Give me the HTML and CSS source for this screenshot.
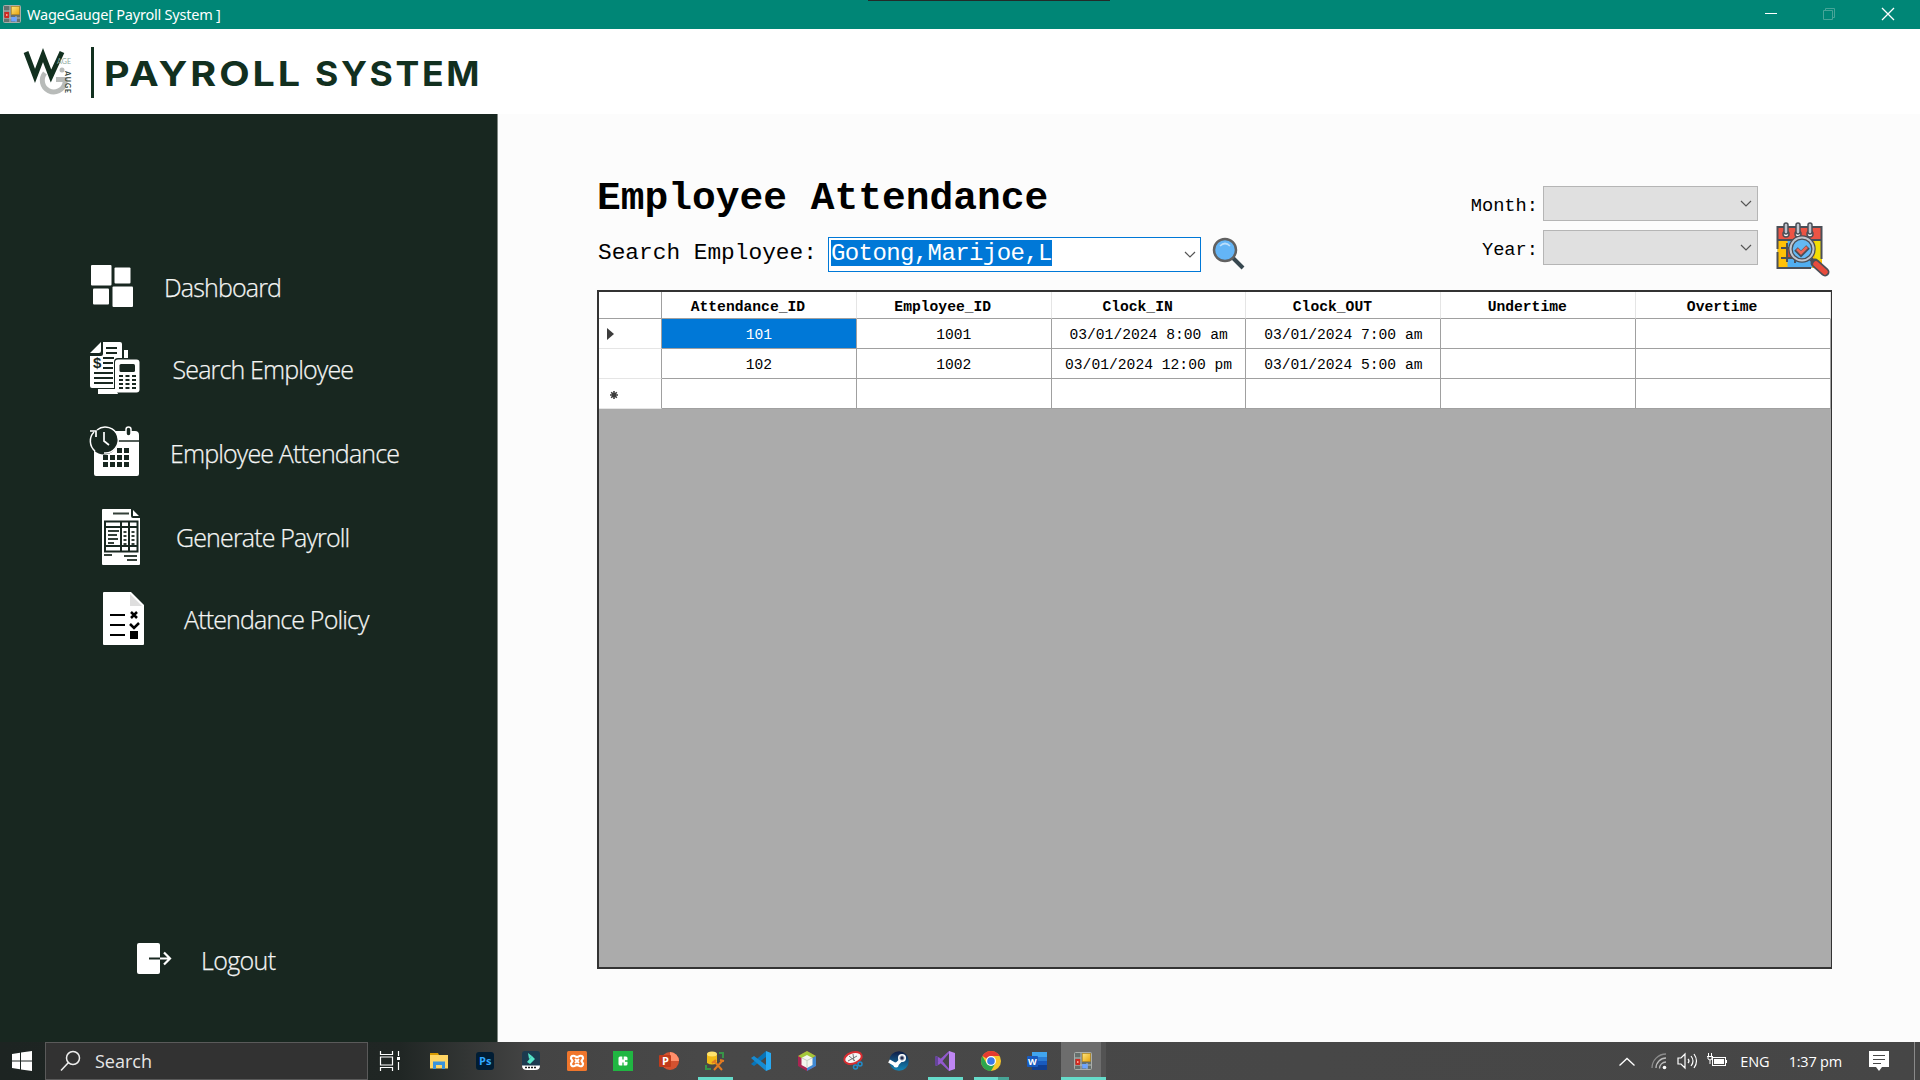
FILE: index.html
```html
<!DOCTYPE html>
<html lang="en">
<head>
<meta charset="utf-8">
<title>WageGauge[ Payroll System ]</title>
<link rel="stylesheet" href="styles.css">
</head>
<body>
<svg class="defs" width="0" height="0">
  <defs>
    <linearGradient id="gold" x1="0" y1="0" x2="1" y2="1"><stop offset="0" stop-color="#ffe680"/><stop offset="1" stop-color="#e8a40c"/></linearGradient>
    <linearGradient id="orb" x1="0" y1="0" x2="0" y2="1"><stop offset="0" stop-color="#101c45"/><stop offset="1" stop-color="#1387b8"/></linearGradient>
    <symbol id="form" viewBox="0 0 18 18">
      <rect x=".5" y=".5" width="17" height="17" rx="1" fill="#66706d" stroke="#a9adaa"/>
      <path d="M1 6h6M7 1v16M1 13h16M13 11v6" stroke="#b9bcb9" fill="none"/>
      <rect x="1.5" y="7" width="4.5" height="6" fill="#d02a21"/><rect x="3" y="9" width="1.5" height="2" fill="#ff9b8b"/>
      <rect x="8.3" y="1.5" width="8" height="8" fill="url(#gold)" stroke="#bd8b18" stroke-width=".6"/>
      <rect x="8.2" y="12" width="5.5" height="4.5" fill="#6da4ff"/>
    </symbol>
  </defs>
</svg>
<div class="screen">
  <header class="titlebar">
    <svg class="app-icon" width="18" height="18"><use href="#form"/></svg>
    <span class="window-title">WageGauge[ Payroll System ]</span>
    <div class="window-buttons">
      <svg width="59" height="29"><path d="M24 13.500h12" stroke="#fff"/></svg>
      <svg width="59" height="29"><path d="M23.500 10.500h9v9h-9zM25.500 10.500v-2h9v9h-2" stroke="#47a598" fill="none"/></svg>
      <svg width="59" height="29"><path d="M23 8l12 12M35 8l-12 12" stroke="#fff" stroke-width="1.300"/></svg>
    </div>
    <div class="top-notch"></div>
  </header>

  <div class="brand">
    <svg width="500" height="85" viewBox="0 29 500 85">
      <path d="M45 73A11.500 11.500 0 1 0 65 83V79.500H56" fill="none" stroke="#b8bbb9" stroke-width="5"/>
      <circle cx="62" cy="70" r="2.500" fill="#b8bbb9"/>
      <path d="M26 52l9 24 8-21 8 21 11-24" fill="none" stroke="#12301f" stroke-width="5" stroke-miterlimit="10"/>
      <text x="57" y="63.500" class="logo-age" textLength="14">AGE</text>
      <text transform="translate(64.500 71) rotate(90)" class="logo-auge" textLength="22">AUGE</text>
      <rect x="91" y="47" width="3" height="51" fill="#12301f"/>
      <text x="104" y="85.500" class="logo-name" textLength="199" lengthAdjust="spacingAndGlyphs">PAYROLL</text>
      <text x="315" y="85.500" class="logo-name" textLength="167" lengthAdjust="spacingAndGlyphs">SYSTEM</text>
    </svg>
  </div>

  <div class="workspace">
    <nav class="sidebar">
      <div class="nav-list">
        <a class="nav-item nav-dashboard">
          <svg width="42" height="42" fill="#fff"><rect width="20.500" height="20.500" rx="1"/><rect x="23.500" y="2.500" width="16" height="16" rx="1"/><rect x="2" y="23.500" width="16" height="16" rx="1"/><rect x="21.500" y="21.500" width="20.500" height="20.500" rx="1"/></svg>
          <span>Dashboard</span>
        </a>
        <a class="nav-item nav-search">
          <svg width="50" height="52" viewBox="0 0 50 52">
            <path d="M34 8h4v8h-4zM8 47h18l2 5H8z" fill="#fff"/>
            <path d="M13 0h17q2 0 2 2v14h-4q-4 0-4 4v26H2q-2 0-2-2V14h11q2 0 2-2zM11 0v9q0 2-2 2H0z" fill="#fff"/>
            <path d="M16 6h11M16 11h11M13 16h11M13 21h10M13 26h10M4 31h19M4 36h19M4 41h19" stroke="#182720" stroke-width="1.900"/>
            <text x="3" y="26" class="dollar">$</text>
            <rect x="25" y="17.500" width="24.500" height="33" rx="3" fill="#fff"/>
            <rect x="29.500" y="22" width="15.500" height="8" rx="1.500" fill="#182720"/>
            <path d="M29 34h17M29 38h17M29 42h17M29 46h17" stroke="#182720" stroke-width="2" stroke-dasharray="4 2.500"/>
          </svg>
          <span>Search Employee</span>
        </a>
        <a class="nav-item nav-attendance">
          <svg width="50" height="49" viewBox="0 0 50 49">
            <path d="M25 4h20q4 0 4 4v39q0 2-2 2H6q-2 0-2-2V20h17z" fill="#fff"/>
            <path d="M27 14h22" stroke="#182720" stroke-width="1.500"/>
            <circle cx="14" cy="13.500" r="14" fill="#182720"/>
            <path d="M7 3A13 13 0 1 1 14 26M5 24A13 13 0 0 1 4 5" stroke="#fff" stroke-width="1.500" fill="none"/>
            <path d="M0 4h6v6M14 5v9l5 4" stroke="#fff" stroke-width="1.700" fill="none"/>
            <rect x="36" y="0" width="5" height="9" rx="2.500" fill="#182720" stroke="#fff" stroke-width="1.500"/>
            <path d="M27 23.500h13M13 30.500h27M13 37.500h27" stroke="#182720" stroke-width="5" stroke-dasharray="5 2"/>
          </svg>
          <span>Employee Attendance</span>
        </a>
        <a class="nav-item nav-payroll">
          <svg width="38" height="56" viewBox="0 0 38 56">
            <path d="M1 0h28v7q0 2 2 2h7v46q0 1-1 1H1q-1 0-1-1V1q0-1 1-1zM31 1l6 6h-6z" fill="#fff"/>
            <path d="M11 4.500h16M2 46h8M22 47h13M25 51h10" stroke="#344039" stroke-width="2"/>
            <rect x="3" y="12.500" width="32.500" height="30" fill="#fff" stroke="#182720" stroke-width="2"/>
            <path d="M3 18h32M3 37h32M19 12v30M27 12v30" stroke="#182720" stroke-width="2"/>
            <path d="M6 22h11M6 26h9M6 30h10M6 34h6" stroke="#344039" stroke-width="1.800"/>
            <path d="M23 22v15M31 22v15" stroke="#344039" stroke-width="3" stroke-dasharray="2 2"/>
          </svg>
          <span>Generate Payroll</span>
        </a>
        <a class="nav-item nav-policy">
          <svg width="41" height="53" viewBox="0 0 41 53">
            <path d="M1 0h27l13 13v39q0 1-1 1H1q-1 0-1-1V1q0-1 1-1z" fill="#fff"/><path d="M27 2l12 12H27z" fill="#dedede"/>
            <path d="M7 23h15M7 33h15M7 43h15" stroke="#000" stroke-width="2.200"/>
            <path d="M28 20l6 6M34 20l-6 6M27 32l4 4 5-5" stroke="#000" stroke-width="2.500" fill="none"/><rect x="27" y="39" width="8" height="8"/>
          </svg>
          <span>Attendance Policy</span>
        </a>
      </div>
      <a class="nav-item nav-logout">
        <svg width="35" height="31" viewBox="0 0 35 31"><rect width="23" height="31" rx="2" fill="#fff"/><path d="M12 15.500h11" stroke="#182720" stroke-width="2"/><path d="M23 15.500h10.500M27 9.500l6 6-6 6" stroke="#fff" stroke-width="2.200" fill="none"/></svg>
        <span>Logout</span>
      </a>
    </nav>

    <main class="content">
      <div class="toolbar">
        <div class="finder">
          <h1>Employee Attendance</h1>
          <div class="search-row">
            <label>Search Employee:</label>
            <div class="combo combo-active"><span class="selection">Gotong,Marijoe,L</span><svg width="12" height="8"><path d="M1 1l5 5 5-5" fill="none" stroke="#555" stroke-width="1.200"/></svg></div>
            <svg class="magnifier" width="33" height="33" viewBox="0 0 33 33">
              <path d="M21 21l10 10" stroke="#37474f" stroke-width="4"/><circle cx="13" cy="13" r="11" fill="#64b5f6" stroke="#616161" stroke-width="2.500"/><path d="M8 9q5-5 10 0" stroke="#bbdefb" stroke-width="1.700" fill="none"/>
            </svg>
          </div>
        </div>
        <div class="period">
          <div class="period-fields">
            <label>Month:</label><div class="combo combo-grey"><svg width="12" height="8"><path d="M1 1l5 5 5-5" fill="none" stroke="#555" stroke-width="1.200"/></svg></div>
            <label>Year:</label><div class="combo combo-grey"><svg width="12" height="8"><path d="M1 1l5 5 5-5" fill="none" stroke="#555" stroke-width="1.200"/></svg></div>
          </div>
          <svg class="calendar" width="54" height="54" viewBox="0 0 54 54">
            <rect x="1.500" y="5" width="44" height="41" fill="#51aef0"/>
            <path d="M1.500 18h10v28h-10zM36 18h10v28H36z" fill="#ffc107"/><path d="M39 18h7v20h-7z" fill="#f3df05"/>
            <rect x="1.500" y="5" width="44" height="13" fill="#ed5444"/><rect x="11" y="26" width="10" height="10" fill="#c94439"/>
            <path d="M5 26h12M5 36h15M11 21v19M19 36v5M1.500 18h44M1.500 27V5h44v32M1.500 30v16H35" stroke="#4b4f57" stroke-width="2" fill="none"/>
            <g fill="#fff" stroke="#4b4f57" stroke-width="1.500"><circle cx="10" cy="12" r="3"/><circle cx="22" cy="12" r="3"/><circle cx="34" cy="12" r="3"/></g>
            <g fill="#c0c5ce" stroke="#4b4f57" stroke-width="1.500"><rect x="8" y="1" width="4" height="11" rx="2"/><rect x="20" y="1" width="4" height="11" rx="2"/><rect x="32" y="1" width="4" height="11" rx="2"/></g>
            <path d="M35 37l4 4" stroke="#4b4f57" stroke-width="4"/><path d="M39 41l10 9" stroke="#4b4f57" stroke-width="9" stroke-linecap="round"/><path d="M40 42l9 8" stroke="#e84c3d" stroke-width="5.500" stroke-linecap="round"/>
            <circle cx="26" cy="27" r="11.500" fill="#64b9f4" stroke="#4b4f57" stroke-width="4.500"/><circle cx="26" cy="27" r="11.500" fill="none" stroke="#c0c5ce" stroke-width="2"/>
            <path d="M20 27l5 5 7-7" stroke="#4b4f57" stroke-width="5" fill="none"/><path d="M21 27l4 4 6-6" stroke="#ed6655" stroke-width="2.800" fill="none"/>
          </svg>
        </div>
      </div>

      <div class="grid-view">
        <div class="grid">
          <div class="stub head"></div><div class="head">Attendance_ID</div><div class="head">Employee_ID</div><div class="head">Clock_IN</div><div class="head">Clock_OUT</div><div class="head">Undertime</div><div class="head">Overtime</div>
          <div class="stub"><svg width="7" height="12"><path d="M0 0l7 6-7 6z" fill="#3c3c3c"/></svg></div><div class="selected">101</div><div>1001</div><div>03/01/2024 8:00 am</div><div>03/01/2024 7:00 am</div><div></div><div></div>
          <div class="stub"></div><div>102</div><div>1002</div><div>03/01/2024 12:00 pm</div><div>03/01/2024 5:00 am</div><div></div><div></div>
          <div class="stub stub-new"><svg width="8" height="8"><path d="M4 0v8M0 4h8M1.200 1.200l5.600 5.600M6.800 1.200L1.200 6.800" stroke="#3c3c3c" stroke-width="1.600"/></svg></div><div></div><div></div><div></div><div></div><div></div><div></div>
        </div>
      </div>
    </main>
  </div>

  <footer class="taskbar">
    <div class="start"><svg width="20" height="20" fill="#fff"><path d="M0 3l8-1.200v7.700H0zM9 1.600L20 0v9.500H9zM0 10.500h8v7.700L0 17zM9 10.500h11V20L9 18.400z"/></svg></div>
    <div class="search-box"><svg width="22" height="22"><circle cx="14" cy="8" r="6.500" fill="none" stroke="#eee" stroke-width="1.500"/><path d="M9.500 12.500L2 20.500" stroke="#eee" stroke-width="1.600"/></svg><span>Search</span></div>
    <div class="task task-view"><svg width="20" height="20"><path d="M.5 0v3.500h12V0M.5 20v-3.500h12V20M.5 6h12v8H.5zM18.500 0v5M18.500 11v8" fill="none" stroke="#fff" stroke-width="1.200"/><rect x="17" y="6" width="3" height="3" fill="#fff"/></svg></div>
    <div class="task"><svg width="18" height="16"><path d="M0 0h8l1 2H0z" fill="#d99a00"/><path d="M0 2h18v13.500H0z" fill="#ffd563"/><path d="M3 8.500h12V16h-3v-4H6v4H3z" fill="#3a93db"/></svg></div>
    <div class="task"><svg width="18" height="18"><rect width="18" height="18" rx="3" fill="#001d34"/><text x="3" y="13" class="ps">Ps</text></svg></div>
    <div class="task"><svg width="18" height="20"><path d="M3 0h12q3 0 3 3v12H0V3q0-3 3-3z" fill="#1c3a4f"/><path d="M6 2l4 3-3 3zM5 11l5-6 3 3-5 5z" fill="#55e5c8"/><path d="M0 14.500h18q0 4.500-5 4.500H5q-5 0-5-4.500z" fill="#fff"/><path d="M3 16.500h12" stroke="#222" stroke-width="1.500" stroke-dasharray="2 1"/></svg></div>
    <div class="task"><svg width="20" height="20"><rect width="20" height="20" rx="1.500" fill="#f0762c"/><path d="M7.500 5q2.500 2 5 0Q16 4 16 7.500L14.500 10 16 12.500Q16 16 12.500 15q-2.500-2-5 0Q4 16 4 12.500L5.500 10 4 7.500Q4 4 7.500 5z" fill="none" stroke="#fff" stroke-width="2.200"/><path d="M8 8l4 4M12 8l-4 4" stroke="#fff" stroke-width="1.800"/></svg></div>
    <div class="task"><svg width="20" height="20"><rect width="20" height="20" fill="#20b642"/><rect x="5.500" y="5.500" width="9" height="9" rx="1.500" fill="#fff"/><path d="M10 5v3.500M10 11.500v3.500M12 10h3" stroke="#20b642" stroke-width="1.300"/></svg></div>
    <div class="task"><svg width="20" height="20"><circle cx="11" cy="10" r="9" fill="#d35230"/><path d="M11 1a9 9 0 0 1 9 9h-9z" fill="#ff8f6b"/><rect y="4" width="12" height="12" rx="1" fill="#c13b1b"/><text x="3" y="14" class="office">P</text></svg></div>
    <div class="task running"><svg width="20" height="20"><path d="M2 3v9q5 3 10 0V3z" fill="#f2bb17"/><ellipse cx="7" cy="3" rx="5" ry="2.500" fill="#ffe36d"/><path d="M14 2h4v5M1 14v4h5" stroke="#389448" stroke-width="2" fill="none"/><path d="M9 10l8 9M18 9l-9 10M7 12l4-3M15 9l4 1" stroke="#e27a22" stroke-width="2"/></svg></div>
    <div class="task"><svg width="20" height="20"><path d="M15 0l5 2v16l-5 2z" fill="#28a9f2"/><path d="M15 0v6L3 15l-3-2L15 0z" fill="#0874b8"/><path d="M15 20v-6L3 5 0 7z" fill="#168bd2"/></svg></div>
    <div class="task"><svg width="18" height="20"><path d="M9 0l9 5v10l-9 5-9-5V5z" fill="#a92552"/><path d="M9 0l9 5-9 5-9-5z" fill="#a4c83a"/><path d="M18 5v10l-9 5V10z" fill="#3f88d1"/><path d="M9 4l5.500 3v7l-5.500 3-5.500-3V7z" fill="#f5f5ef"/><path d="M4 7l5 2.500L14 7M9 9.500V16" stroke="#c5d0c0" fill="none"/></svg></div>
    <div class="task"><svg width="20" height="20"><ellipse cx="10" cy="7" rx="9" ry="5.500" transform="rotate(-18 10 7)" fill="#f5f5f5" stroke="#d92d31" stroke-width="2"/><path d="M10 3l1 7M5 10l9-5M6 5l6 5" stroke="#777"/><circle cx="12.500" cy="16" r="2" fill="none" stroke="#238bc8" stroke-width="1.500"/><circle cx="17" cy="13" r="2" fill="none" stroke="#238bc8" stroke-width="1.500"/></svg></div>
    <div class="task"><svg width="20" height="20"><circle cx="10" cy="10" r="9.800" fill="url(#orb)"/><path d="M0 10l7 4 6-6" stroke="#fff" stroke-width="3.500" fill="none"/><circle cx="13" cy="7" r="4" fill="#fff"/><circle cx="13" cy="7" r="2.200" fill="#222d50" stroke="#b5bdca"/><circle cx="7" cy="14" r="2.500" fill="#fff"/></svg></div>
    <div class="task running"><svg width="20" height="20"><path d="M1 5l4 2 10 12-1 1L0 7zM0 13l14-13 1 1L5 13l-4 2z" fill="#9259ce"/><path d="M1 5l-1 1v8l1 1 2-1V6z" fill="#65449a"/><path d="M14 0l6 2v16l-6 2z" fill="#bf86f4"/></svg></div>
    <div class="task running stacked"><svg width="20" height="20"><circle cx="10" cy="10" r="10" fill="#f7c72a"/><path d="M10 10L1.340 5A10 10 0 0 1 18.660 5H10z" fill="#e53b30"/><path d="M10 10l4.300 2.500L10 20A10 10 0 0 1 1.340 5l4.300 7.500z" fill="#2ca64e"/><circle cx="10" cy="10" r="5" fill="#fff"/><circle cx="10" cy="10" r="3.800" fill="#3979e9"/></svg></div>
    <div class="task"><svg width="20" height="18"><path d="M5 0h15v5H5z" fill="#41a5ee"/><path d="M5 5h15v4H5z" fill="#2b7cd3"/><path d="M5 9h15v5H5z" fill="#185abd"/><path d="M5 13h15v5H5z" fill="#103f91"/><rect y="4" width="11" height="11" rx="1" fill="#185abd"/><text x="1" y="13" class="office word">W</text></svg></div>
    <div class="task active"><svg width="18" height="18"><use href="#form"/></svg></div>
    <div class="tray">
      <svg class="chevron" width="16" height="9"><path d="M.5 8.500l7.500-7 7.500 7" fill="none" stroke="#fff" stroke-width="1.300"/></svg>
      <svg width="17" height="17"><g fill="none" stroke="#bbb" stroke-width="1.300"><path d="M1 15A14 14 0 0 1 15 1" opacity=".6"/><path d="M5 15A10 10 0 0 1 15 5M8.500 15.500A6.500 6.500 0 0 1 15 9"/></g><circle cx="13.500" cy="14.500" r="1.800" fill="#fff"/></svg>
      <svg width="21" height="18"><path d="M1 6h3l4-4v14l-4-4H1zM11 7q2 2 0 4M14 4q4 5 0 10M17 2q5 7 0 14" fill="none" stroke="#fff" stroke-width="1.200"/></svg>
      <svg width="21" height="16"><rect x="5.500" y="4.500" width="13" height="8" fill="none" stroke="#fff"/><rect x="7" y="6" width="10" height="5" fill="#fff"/><path d="M19.500 7v3M1.500 0v3M4.500 0v3M0 3.500h6M1 4v2q2 2 4 0V4M3 7v4" fill="none" stroke="#fff"/></svg>
      <span class="lang">ENG</span>
      <span class="clock">1:37 pm</span>
      <svg class="notice" width="20" height="20"><path d="M0 0h20v16h-7l-3 4-3-4H0z" fill="#fff"/><path d="M4 4.500h12M4 8.500h12M4 12.500h8" stroke="#484848" stroke-width="1.200"/></svg>
      <i class="peek"></i>
    </div>
  </footer>
</div>
</body>
</html>
```
FILE: styles.css
```css
* { box-sizing: border-box; }
body { margin: 0; overflow: hidden; font-family: "Open Sans", "Noto Sans", sans-serif; }
svg { display: block; flex: none; overflow: visible; }
.defs { position: absolute; }
.screen { display: flex; flex-direction: column; width: 1920px; height: 1080px; background: #fff; }

.titlebar { position: relative; display: flex; align-items: center; height: 29px; flex: none; padding-left: 3px; background: #008676; color: #fff; }
.app-icon { margin-top: -1px; }
.window-title { margin: -1px 0 0 6px; font-family: "Noto Sans", sans-serif; font-size: 14.500px; letter-spacing: -0.220px; white-space: nowrap; }
.window-buttons { display: flex; margin-left: auto; margin-right: 2px; }
.top-notch { position: absolute; top: 0; left: 868px; width: 242px; height: 1px; background: #222b29; }

.brand { height: 85px; flex: none; background: #fff; }
.logo-name { font: 700 34px Inter, sans-serif; letter-spacing: 2.500px; fill: #12301f; }
.logo-age { font: 7px Lato, sans-serif; fill: #8ca89b; }
.logo-auge { font: 700 7px Lato, sans-serif; fill: #34473d; }

.workspace { display: flex; flex: none; height: 928px; }
.sidebar { display: flex; flex-direction: column; width: 498px; padding-top: 131px; background: #182720; border-right: 1px solid #7f8783; }
.nav-list { display: flex; flex-direction: column; }
.nav-item { display: flex; align-items: center; height: 83px; color: #f4f5f4; font-size: 25px; font-weight: 300; letter-spacing: -0.850px; white-space: nowrap; }
.nav-item span { padding-top: 2px; -webkit-text-stroke: 0.250px #f4f5f4; }
.nav-dashboard { height: 82px; padding-left: 91px; gap: 31px; }
.nav-search { height: 82px; padding-left: 90px; gap: 32.500px; }
.nav-attendance { height: 85px; padding-left: 90px; gap: 30px; }
.nav-payroll { height: 85px; padding-left: 102px; gap: 36px; }
.nav-payroll span { padding-top: 0; }
.nav-policy { height: 79px; padding-left: 103px; gap: 40px; }
.nav-policy span { padding-top: 0; }
.nav-logout { margin-top: 259px; padding-left: 137px; gap: 29px; letter-spacing: -0.650px; }
.dollar { font: 700 15px "Liberation Sans", sans-serif; letter-spacing: 0; fill: #182720; }

.content { flex: 1; padding: 55px 0 0 99px; background: #fcfcfc; font-family: "Courier New", "Liberation Mono", monospace; color: #000; }
.toolbar { display: flex; justify-content: space-between; width: 1233px; height: 121px; }
.finder { display: flex; flex-direction: column; }
h1 { margin: 0; height: 68px; padding-top: 7px; font-size: 39.600px; line-height: 45px; white-space: nowrap; }
.search-row { display: flex; align-items: flex-start; }
.search-row label { width: 231px; padding: 2px 0 0 1px; font-size: 22.800px; line-height: 28px; white-space: nowrap; }
.combo { display: flex; align-items: center; justify-content: space-between; height: 35px; }
.combo-active { width: 373px; padding: 0 4px 0 2px; background: #fff; border: 1px solid #0078d7; }
.selection { height: 26px; margin-top: -3px; background: #0078d7; color: #fff; font-size: 24px; line-height: 27px; letter-spacing: -0.600px; white-space: nowrap; }
.magnifier { margin: 0 0 0 11px; }
.period { display: flex; gap: 18px; padding-top: 17px; }
.period-fields { display: grid; grid-template-columns: auto 215px; grid-template-rows: 35px 35px; align-content: start; align-items: center; column-gap: 5px; row-gap: 9px; }
.period-fields label { text-align: right; font-size: 18.700px; padding-top: 4px; }
.combo-grey { justify-content: flex-end; padding-right: 5px; background: #e0e0e0; border: 1px solid #b5b5b5; }
.calendar { margin-top: 36px; }

.grid-view { width: 1235px; height: 679px; border: 2px solid #333; border-right-width: 1px; background: #ababab; }
.grid { display: grid; grid-template-columns: 63px repeat(6, 194.830px); grid-template-rows: 27px repeat(3, 30px); width: 1232px; font-size: 14.670px; }
.grid > div { display: flex; align-items: center; justify-content: center; padding-top: 3px; background: #fff; border-right: 1px solid #a0a0a0; border-bottom: 1px solid #a0a0a0; white-space: nowrap; }
.grid > .head { padding-right: 22px; font-weight: 700; border-right-color: #e5e5e5; }
.grid > .stub { justify-content: flex-start; padding-left: 8px; padding-top: 0; border-bottom-color: #e5e5e5; border-right-color: #a0a0a0; }
.grid > .stub.head { border-bottom-color: #a0a0a0; }
.grid > .stub-new { padding-left: 11px; padding-top: 2px; }
.grid > .selected { background: #0078d7; color: #fff; }

.taskbar { display: flex; align-items: stretch; height: 38px; flex: none; background: linear-gradient(90deg, #1d2422 0, #202624 400px, #444 530px, #484848 700px, #464646 100%); color: #fff; }
.start { display: flex; align-items: center; width: 45px; padding-left: 12px; }
.search-box { display: flex; align-items: center; gap: 14px; width: 323px; padding-left: 13px; margin-right: -2px; background: #323232; border: 1px solid #5a5a5a; color: #e6e6e6; font-size: 18px; }
.search-box span { padding-bottom: 1px; }
.task { position: relative; display: flex; align-items: center; justify-content: center; width: 46px; }
.task-view { width: 50px; padding-right: 2px; }
.running::after { content: ""; position: absolute; left: 6px; bottom: 0; width: 35px; height: 3px; background: #66dbca; }
.stacked::after { background: linear-gradient(90deg, #66dbca 24px, #47a496 24px); }
.active { width: 45px; margin-left: 1px; padding: 3px 2px 0 0; background: linear-gradient(90deg, #6d6d6d 40px, #535353 40px); border-bottom: 3px solid #66dbca; }
.ps { font: 700 11px "Open Sans", sans-serif; fill: #31a8ff; }
.office { font: 700 11px "Open Sans", sans-serif; fill: #fff; }
.word { font-size: 9px; }
.tray { display: flex; align-items: center; margin-left: auto; gap: 9px; font-size: 14.500px; white-space: nowrap; }
.chevron { margin-right: 7px; }
.lang { margin-left: 3px; }
.clock { margin-left: 10px; font-size: 14.500px; letter-spacing: -0.200px; }
.notice { margin-left: 18px; }
.peek { width: 6px; height: 38px; margin-left: 16px; border-left: 1px solid #8a8a8a; }
```
